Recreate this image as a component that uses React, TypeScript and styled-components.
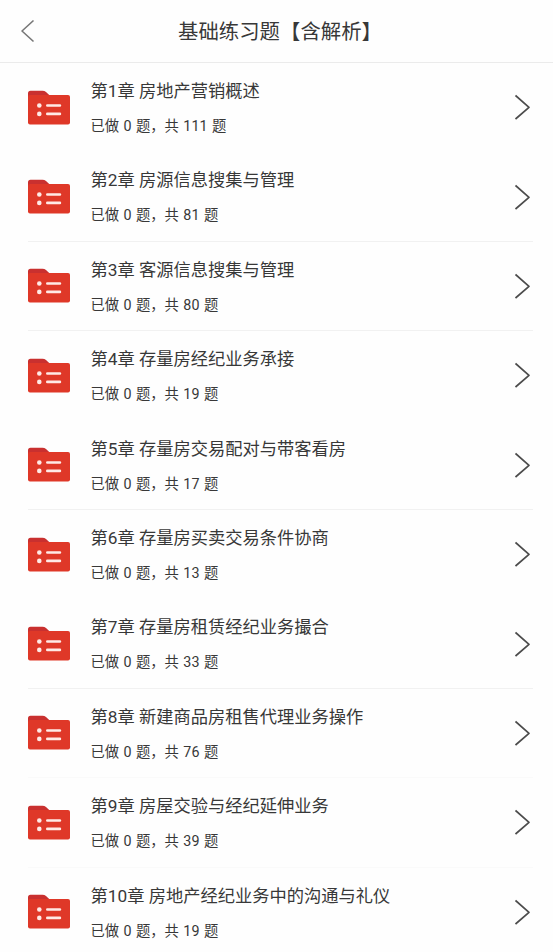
import React from "react";
import styled, { createGlobalStyle } from "styled-components";

const GlobalStyle = createGlobalStyle`
  * { box-sizing: border-box; }
  body { margin: 0; background: #fefefe; overflow: hidden; }
`;

const Screen = styled.main`
  width: 553px;
  height: 952px;
  overflow: hidden;
  background: #fefefe;
  color: #383838;
  font-family: Roboto, "Noto Sans CJK SC", sans-serif;
  font-weight: 400;
`;

const Header = styled.header`
  display: grid;
  grid-template-columns: 60px 1fr 53px;
  align-items: center;
  height: 63px;
  border-bottom: 1px solid #ebebeb;
`;

const BackButton = styled.button`
  display: flex;
  align-items: center;
  width: 60px;
  height: 62px;
  padding: 0 0 0 20px;
  border: 0;
  background: none;
`;

const Title = styled.h1`
  margin: 1px 0 0;
  font-size: 20.4px;
  line-height: 30px;
  font-weight: 400;
  text-align: center;
  white-space: nowrap;
`;

const List = styled.ul`
  margin: 0;
  padding: 0;
  list-style: none;
`;

const Row = styled.li<{ $line: string }>`
  display: grid;
  grid-template-columns: 62.5px 1fr 18px;
  align-items: center;
  height: 89.4px;
  margin: 0 20px 0 28px;
  border-bottom: 1px solid ${(p) => p.$line};
`;

const ChapterName = styled.div`
  font-size: 17.25px;
  line-height: 24px;
  white-space: nowrap;
`;

const Progress = styled.div`
  margin-top: 13px;
  font-size: 14.3px;
  line-height: 20px;
  word-spacing: 0.9px;
  white-space: nowrap;
`;

const Details = styled.div`
  padding-top: 0.8px;
`;

const chapters = [
  { name: "房地产营销概述", total: 111, line: "#fefefe" },
  { name: "房源信息搜集与管理", total: 81, line: "#f1f1f1" },
  { name: "客源信息搜集与管理", total: 80, line: "#f1f1f1" },
  { name: "存量房经纪业务承接", total: 19, line: "#fefefe" },
  { name: "存量房交易配对与带客看房", total: 17, line: "#f1f1f1" },
  { name: "存量房买卖交易条件协商", total: 13, line: "#fefefe" },
  { name: "存量房租赁经纪业务撮合", total: 33, line: "#f1f1f1" },
  { name: "新建商品房租售代理业务操作", total: 76, line: "#fafafa" },
  { name: "房屋交验与经纪延伸业务", total: 39, line: "#fafafa" },
  { name: "房地产经纪业务中的沟通与礼仪", total: 19, line: "#fefefe" },
];

const FolderIcon = () => (
  <svg width="42" height="35" viewBox="0 -0.7 42 35">
    <path d="M0 9V2.5Q0 0 2.5 0H14.5Q16.5 0 18 1.4L21.5 4.5V9Z" fill="#c9302f" />
    <path d="M0 6Q0 4.3 2 4.3H40Q42 4.3 42 6.3V31.7Q42 33.7 40 33.7H2Q0 33.7 0 31.7Z" fill="#df3828" />
    <g fill="#ffeae6">
      <circle cx="11.3" cy="14.8" r="2.3" />
      <circle cx="11.3" cy="23.2" r="2.3" />
      <rect x="18" y="13.5" width="15.2" height="2.6" rx="1.3" />
      <rect x="18" y="21.9" width="15.2" height="2.6" rx="1.3" />
    </g>
  </svg>
);

export default function App() {
  return (
    <Screen>
      <GlobalStyle />
      <Header>
        <BackButton aria-label="返回">
          <svg width="15" height="24" viewBox="0 0 15 24" fill="none" stroke="#777" strokeWidth="1.6" strokeLinejoin="round">
            <path d="M13.5 1.5L2 12L13.5 22.5" />
          </svg>
        </BackButton>
        <Title>基础练习题【含解析】</Title>
      </Header>
      <List>
        {chapters.map((c, i) => (
          <Row key={c.name} $line={c.line}>
            <FolderIcon />
            <Details>
              <ChapterName>第{i + 1}章 {c.name}</ChapterName>
              <Progress>已做 0 题，共 {c.total} 题</Progress>
            </Details>
            <svg width="16" height="26" viewBox="0 0 16 26" fill="none" stroke="#4c4c4c" strokeWidth="1.7" strokeLinejoin="round">
              <path d="M0.5 1.5L14 13.3L0.5 25" />
            </svg>
          </Row>
        ))}
      </List>
    </Screen>
  );
}
